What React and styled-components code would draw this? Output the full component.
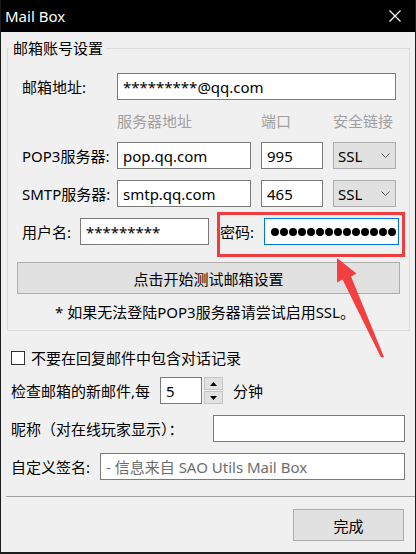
import styled, { createGlobalStyle } from "styled-components";

const GlobalStyle = createGlobalStyle`
  html, body {
    margin: 0;
    padding: 0;
    background: #f0f0f0;
  }
  body {
    font-family: "Noto Sans", "Noto Sans CJK SC", sans-serif;
    font-size: 15px;
    line-height: 20px;
    color: #000;
  }
  * {
    box-sizing: border-box;
  }
`;

export default function App() {
  return (
    <>
      <GlobalStyle />
      <Window>
        <TitleBar>
          <Title>Mail Box</Title>
          <CloseIcon width="12" height="12" viewBox="0 0 12 12">
            <path d="M0.5 0.5 L11.5 11.5 M11.5 0.5 L0.5 11.5" stroke="#fff" strokeWidth="1.2" />
          </CloseIcon>
        </TitleBar>

        <GroupBox>
          <Legend>邮箱账号设置</Legend>
          <GroupInner>
            <Row>
              <Label $width={95}>邮箱地址:</Label>
              <Input readOnly value="*********@qq.com" $grow />
            </Row>

            <HeaderRow>
              <Spacer $width={95} />
              <Header $width={144}>服务器地址</Header>
              <Header $width={72}>端口</Header>
              <Header>安全链接</Header>
            </HeaderRow>

            <Row>
              <Label $width={95}>POP3服务器:</Label>
              <Input readOnly value="pop.qq.com" $width={134} />
              <Input readOnly value="995" $width={62} $ml={10} />
              <Select $ml={10}>
                SSL
                <Chevron width="9" height="5" viewBox="0 0 9 5">
                  <path d="M0.5 0.5 L4.5 4.5 L8.5 0.5" fill="none" stroke="#555" strokeWidth="1" />
                </Chevron>
              </Select>
            </Row>

            <Row $mt={11}>
              <Label $width={95}>SMTP服务器:</Label>
              <Input readOnly value="smtp.qq.com" $width={134} />
              <Input readOnly value="465" $width={62} $ml={10} />
              <Select $ml={10}>
                SSL
                <Chevron width="9" height="5" viewBox="0 0 9 5">
                  <path d="M0.5 0.5 L4.5 4.5 L8.5 0.5" fill="none" stroke="#555" strokeWidth="1" />
                </Chevron>
              </Select>
            </Row>

            <Row $mt={11}>
              <Label $width={58}>用户名:</Label>
              <Input readOnly value="*********" $width={129} />
              <PasswordGroup>
                <Label $width={44}>密码:</Label>
                <PasswordBox>
                  <DotTrack>
                    {Array.from({ length: 14 }).map((_, i) => (
                      <Dot key={i} />
                    ))}
                  </DotTrack>
                </PasswordBox>
                <Highlight />
              </PasswordGroup>
            </Row>

            <TestButton>点击开始测试邮箱设置</TestButton>
            <Note>* 如果无法登陆POP3服务器请尝试启用SSL。</Note>
          </GroupInner>
        </GroupBox>

        <Lower>
          <CheckRow>
            <CheckBox />
            <span>不要在回复邮件中包含对话记录</span>
          </CheckRow>

          <Row $mt={9}>
            <Label $width={149}>检查邮箱的新邮件,每</Label>
            <Input readOnly value="5" $width={42} />
            <Spin>
              <SpinButton>
                <svg width="7" height="4" viewBox="0 0 7 4">
                  <path d="M0 4 L3.5 0 L7 4 Z" fill="#000" />
                </svg>
              </SpinButton>
              <SpinButton>
                <svg width="7" height="4" viewBox="0 0 7 4">
                  <path d="M0 0 L3.5 4 L7 0 Z" fill="#000" />
                </svg>
              </SpinButton>
            </Spin>
            <Label $ml={10}>分钟</Label>
          </Row>

          <Row $mt={11}>
            <Label $width={202}>昵称（对在线玩家显示）：</Label>
            <Input readOnly value="" $grow />
          </Row>

          <Row $mt={11}>
            <Label $width={89}>自定义签名:</Label>
            <Input readOnly placeholder="- 信息来自 SAO Utils Mail Box" $grow />
          </Row>
        </Lower>

        <Separator />

        <Footer>
          <DoneButton>完成</DoneButton>
        </Footer>

        <Arrow width="416" height="554" viewBox="0 0 416 554">
          <path
            d="M337 258 L356.5 273.5 L351 276.5 L384 357 L381 357.5 L342.5 279.5 L337 282.5 Z"
            fill="#f33f3f"
          />
        </Arrow>
      </Window>
    </>
  );
}

const Window = styled.div`
  position: relative;
  width: 416px;
  height: 554px;
  background: #f0f0f0;
  border-left: 1px solid #1c1c1c;
  border-right: 1px solid #1c1c1c;
  border-bottom: 2px solid #1c1c1c;
  display: flex;
  flex-direction: column;
  overflow: hidden;
`;

const TitleBar = styled.div`
  height: 32px;
  flex-shrink: 0;
  background: #000;
  color: #fff;
  display: flex;
  align-items: center;
  justify-content: space-between;
  margin: 0 -1px;
  padding: 0 15px 0 5px;
`;

const Title = styled.span`
  font-family: "Noto Sans", sans-serif;
  font-size: 15px;
`;

const CloseIcon = styled.svg`
  display: block;
  margin-top: -1px;
`;

const GroupBox = styled.fieldset`
  margin: 6px 5px 0 6px;
  padding: 0;
  border: 1px solid #dcdcdc;
  min-width: 0;
`;

const Legend = styled.legend`
  margin-left: 2px;
  padding: 0 3px;
  font-size: 15px;
  line-height: 20px;
`;

const GroupInner = styled.div`
  padding: 15px 13px 0 14px;
  display: flex;
  flex-direction: column;
`;

const Row = styled.div`
  display: flex;
  align-items: center;
  height: 27px;
  margin-top: ${(p) => p.$mt || 0}px;
`;

const Label = styled.span`
  flex-shrink: 0;
  white-space: nowrap;
  width: ${(p) => (p.$width ? `${p.$width}px` : "auto")};
  margin-left: ${(p) => p.$ml || 0}px;
`;

const Spacer = styled.div`
  width: ${(p) => p.$width}px;
  flex-shrink: 0;
`;

const HeaderRow = styled.div`
  display: flex;
  align-items: center;
  height: 42px;
`;

const Header = styled.span`
  color: #a0a0a0;
  white-space: nowrap;
  width: ${(p) => (p.$width ? `${p.$width}px` : "auto")};
`;

const Input = styled.input`
  height: 27px;
  border: 1px solid #7a7a7a;
  background: #fff;
  padding: 0 5px;
  font-family: "Noto Sans", "Noto Sans CJK SC", sans-serif;
  font-size: 15px;
  color: #000;
  outline: none;
  min-width: 0;
  flex: ${(p) => (p.$grow ? "1 1 auto" : "0 0 auto")};
  width: ${(p) => (p.$width ? `${p.$width}px` : "auto")};
  margin-left: ${(p) => p.$ml || 0}px;

  &::placeholder {
    color: #6d6d6d;
    opacity: 1;
  }
`;

const Select = styled.div`
  flex: 1 1 auto;
  height: 27px;
  margin-left: ${(p) => p.$ml || 0}px;
  background: #e1e1e1;
  border: 1px solid #adadad;
  display: flex;
  align-items: center;
  justify-content: space-between;
  padding: 0 5px 0 4px;
`;

const Chevron = styled.svg`
  display: block;
`;

const PasswordGroup = styled.div`
  position: relative;
  flex: 1 1 auto;
  display: flex;
  align-items: center;
  height: 27px;
  margin-left: 11px;
`;

const PasswordBox = styled.div`
  flex: 1 1 auto;
  height: 27px;
  background: #fff;
  border: 1px solid #0078d7;
  padding: 0 2px 0 6px;
  display: flex;
  align-items: center;
`;

const DotTrack = styled.div`
  flex: 1 1 auto;
  display: flex;
  align-items: center;
  gap: 1px;
  overflow: hidden;
`;

const Dot = styled.span`
  flex-shrink: 0;
  width: 8px;
  height: 8px;
  border-radius: 50%;
  background: #000;
`;

const Highlight = styled.div`
  position: absolute;
  top: -6px;
  left: -3px;
  right: -6px;
  bottom: -12px;
  border: 3px solid #f03c3c;
  pointer-events: none;
`;

const TestButton = styled.button`
  margin: 17px -4px 0 -5px;
  height: 32px;
  background: #e1e1e1;
  border: 1px solid #adadad;
  font-family: "Noto Sans", "Noto Sans CJK SC", sans-serif;
  font-size: 15px;
  color: #000;
  padding: 0;
`;

const Note = styled.div`
  text-align: center;
  padding: 8px 0;
  margin-left: -8px;
`;

const Lower = styled.div`
  padding: 0 10px;
  display: flex;
  flex-direction: column;
`;

const CheckRow = styled.div`
  display: flex;
  align-items: center;
  height: 20px;
  margin-top: 17px;
`;

const CheckBox = styled.span`
  width: 14px;
  height: 14px;
  border: 1px solid #333;
  background: #fff;
  margin-right: 6px;
  flex-shrink: 0;
`;

const Spin = styled.div`
  display: flex;
  flex-direction: column;
  gap: 1px;
  margin-left: 2px;
  height: 27px;
`;

const SpinButton = styled.div`
  width: 19px;
  height: 13px;
  background: #e1e1e1;
  border: 1px solid #c4c4c4;
  display: flex;
  align-items: center;
  justify-content: center;
`;

const Separator = styled.div`
  height: 1px;
  background: #a0a0a0;
  margin: 16px 0 0 5px;
`;

const Footer = styled.div`
  display: flex;
  justify-content: flex-end;
  padding: 12px 11px 0 0;
`;

const DoneButton = styled.button`
  width: 111px;
  height: 32px;
  background: #e1e1e1;
  border: 1px solid #adadad;
  font-family: "Noto Sans", "Noto Sans CJK SC", sans-serif;
  font-size: 15px;
  color: #000;
  padding: 0;
`;

const Arrow = styled.svg`
  position: absolute;
  left: -1px;
  top: 0;
  pointer-events: none;
`;
